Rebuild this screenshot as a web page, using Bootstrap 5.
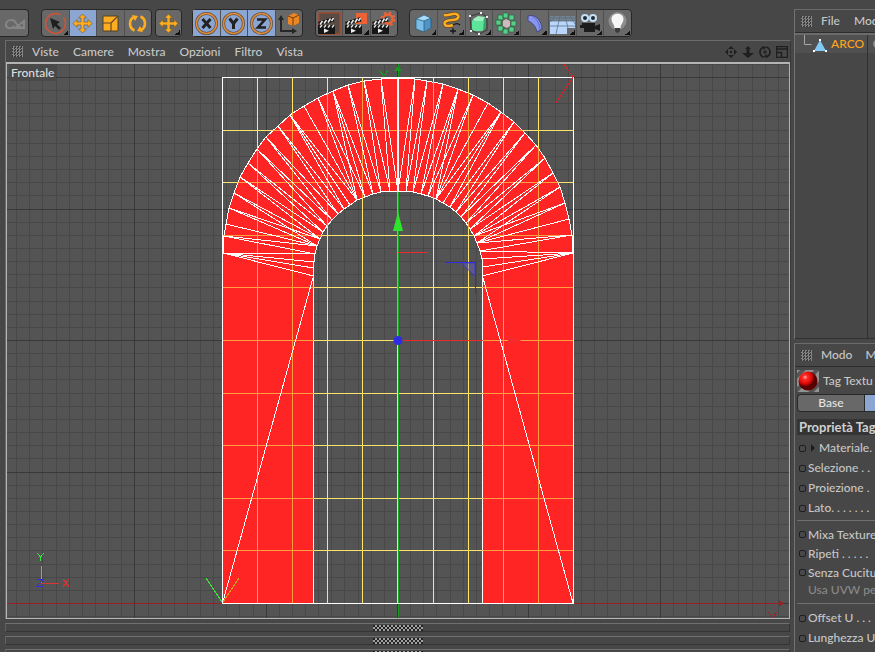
<!DOCTYPE html>
<html lang="it">
<head>
<meta charset="utf-8">
<meta name="viewport" content="width=device-width, initial-scale=1">
<title>ARCO</title>
<link href="https://cdn.jsdelivr.net/npm/bootstrap@5.3.0/dist/css/bootstrap.min.css" rel="stylesheet">
<style>
body{background:#474747;color:#c6c6c6;font:500 12px/16px Lato,"Open Sans",sans-serif;height:100vh;min-height:480px}
button{font:inherit;color:inherit;background:none;border:0;padding:0}
.side-panel{width:81px;padding-top:9px}
.tools{height:29px;margin-top:9px}
.tool-set{border:1px solid #272727;border-radius:4px;background:#686868;height:28px}
.tool-set button{flex:1 1 0;min-width:0;position:relative;border-right:1px solid #505050;display:flex;align-items:center;justify-content:center}
.tool-set button:last-child{border-right:0}
.tool-set button.on{background:#8ba6d2}
.tool-set svg{width:25px;height:25px;flex:none}
.more::after{content:"";position:absolute;right:1px;bottom:1px;background:linear-gradient(135deg,transparent 50%,#111 50%);width:5px;height:5px}
.w1{width:29px;border-left:0!important;border-radius:0 4px 4px 0!important}
.w3{width:83px}.w4{width:111px}.w8{width:223px}.w0{width:27px}
.view-edge{border-left:1px solid #6b6b6b;border-top:1px solid #6b6b6b;border-right:1px solid #383838;margin-left:5px;margin-right:3px;margin-top:2px}
.menu-row{height:21px}
.menu-items{gap:14px;padding-left:9px}
.grip{width:11px;height:11px;background:repeating-conic-gradient(#858585 0 25%,#3a3a3a 0 50%) 0 0/3px 3px}
.canvas-box{border:2px solid #b4b4b4;border-left-width:1px;border-right-width:1px;border-bottom-width:1px;background:#545454;position:relative;min-height:0}
.canvas-box svg{display:block;width:100%;height:100%;position:absolute;inset:0}
.view-name{position:absolute;left:2px;top:1px;background:#494949;color:#dedede;padding:0 2px;border-radius:2px}
.dock{height:9px;margin:4px 4px 0 5px;border:1px solid #343434;border-top-color:#707070;border-left-color:#606060}
.dock span{width:50px;height:6px;background:repeating-conic-gradient(#a0a0a0 0 25%,#242424 0 50%) 0 0/4px 4px}
.docks{height:33px}
.panel{border-left:1px solid #737373;border-top:1px solid #6b6b6b;overflow:hidden;white-space:nowrap}
.panel-head{height:23px;border-bottom:1px solid #2d2d2d;padding-left:6px;gap:9px}
.objects{height:306px;border-top:2px solid #6b6b6b;border-bottom:1px solid #303030}
.object-row{height:18px;background:#505050;color:#ffa31b}
.objects .flags{border-left:1px solid #303030;width:8px}
.tab-row{height:18px;border:1px solid #292929;border-right:0;border-radius:4px 0 0 4px;background:#686868;color:#e4e4e4}
.tab-row button:first-child{width:67px;border-right:1px solid #292929}
.tab-row button:last-child{background:#8ba6d2}
.prop-title{background:#343434;color:#d0d0d0;height:16px;margin-top:7px;padding-left:2px;font-size:13px}
.prop{height:20px}
.prop-group .prop{height:19px}
.prop input{appearance:none;width:7px;height:7px;border:1px solid #1e1e1e;border-radius:2px;background:#494949;margin:0 2px;flex:none}
.prop-note{padding-left:11px;color:#898989}
.prop-sep{border-top:1px solid #707070;margin:2px 0 4px}
.arrow{width:4px;height:8px;background:#1c1c1c;clip-path:polygon(0 0,100% 50%,0 100%);margin:0 4px 0 3px}
</style>
<script src="https://cdn.jsdelivr.net/npm/bootstrap@5.3.0/dist/js/bootstrap.bundle.min.js"></script>
</head>
<body class="d-flex overflow-hidden">
<svg width="0" height="0" class="position-absolute" aria-hidden="true">
<defs>
<g id="clap"><path d="M1 14h17v9H1z" fill="#171717"/><path d="M1 11l15-5 1.500 4.500L2 14z" fill="#171717"/><path d="M3 13.500l2.500-3.500M7 12.500L9.500 9M11 11.500L13.500 7.500M14.500 10l2-3" stroke="#eee" stroke-width="1.500"/><path d="M3 16.500l2-2.500M7 16.500l2-2.500M11 16.500l2-2.500M15 16.500l2-2.500" stroke="#ddd" stroke-width="1.500"/><path d="M7 17.500l5 2.300-5 2.200z" fill="#eee"/></g>
<g id="ring"><circle cx="12.500" cy="12.500" r="10" fill="none" stroke="#5e5148" stroke-width="3"/><circle cx="12.500" cy="12.500" r="10" fill="none" stroke="#e38c37" stroke-width="1.500"/></g>
</defs>
</svg>
<main class="flex-grow-1 d-flex flex-column" style="min-width:0">
<div class="tools d-flex flex-shrink-0" role="toolbar" aria-label="Strumenti">
<div class="tool-set w1 d-flex"><button aria-label="Ripeti azione"><svg viewBox="0 0 25 25" fill="none" stroke="#858585" stroke-width="2"><path d="M12 15c-3 4-9 2-8-2 1-5 8-5 10-1 2 3 4 5 6 4M13 17h9v-7z"/></svg></button></div>
<div class="tool-set w4 d-flex" style="margin-left:12px">
<button class="more" aria-label="Selezione"><svg viewBox="0 0 25 25"><circle cx="12.500" cy="12.500" r="10" fill="none" stroke="#cf5439" stroke-width="1.500" stroke-dasharray="52 4"/><path d="M7 7l10 4-3 2 4 4-2 2-4-4-2 3z" fill="#202020"/></svg></button>
<button class="on" aria-label="Muovi"><svg viewBox="0 0 25 25"><path id="mv" d="M12.500 3l4 4h-2.500v4h4V8.500l4 4-4 4V14h-4v4h2.500l-4 4-4-4H11v-4H7v2.500l-4-4 4-4V11h4V7H8.500z" fill="#ffad20" stroke="#66512c" stroke-width=".6"/></svg></button>
<button aria-label="Scala"><svg viewBox="0 0 25 25"><path d="M5 5h15v15H5z" fill="#ffad20" stroke="#554022"/><path d="M5 12h8v8M13 12l7-7" fill="none" stroke="#624a27" stroke-width="1.200"/></svg></button>
<button aria-label="Ruota"><svg viewBox="0 0 25 25"><path d="M9.500 19.500a7.500 7.500 0 0 1-.5-13.500M15.500 5.500a7.500 7.500 0 0 1 .5 13.500" fill="none" stroke="#ffad20" stroke-width="2.600"/><path d="M7 4l6 1-3 5zM18 21l-6-1 3-5z" fill="#ffad20"/></svg></button></div>
<div class="tool-set w0 d-flex" style="margin-left:3px"><button class="more" aria-label="Ultimo strumento"><svg viewBox="0 0 25 25"><use href="#mv"/></svg></button></div>
<div class="tool-set w4 d-flex" style="margin-left:10px">
<button class="on" aria-label="Asse X"><svg viewBox="0 0 25 25"><use href="#ring"/><path d="M8.500 8l8 9M16.500 8l-8 9" stroke="#222" stroke-width="3"/></svg></button>
<button class="on" aria-label="Asse Y"><svg viewBox="0 0 25 25"><use href="#ring"/><path d="M8.500 7.500l4 5 4-5M12.500 12v6" fill="none" stroke="#222" stroke-width="3"/></svg></button>
<button class="on" aria-label="Asse Z"><svg viewBox="0 0 25 25"><use href="#ring"/><path d="M8 8.500h8l-7 8h8" fill="none" stroke="#222" stroke-width="2.600"/></svg></button>
<button aria-label="Coordinate"><svg viewBox="0 0 25 25"><path d="M5 8v12h12" fill="none" stroke="#262626" stroke-width="2"/><path d="M5 4l3 5H2zM21 20l-5 3v-6z" fill="#262626"/><path d="M12 5l6-3 5 2v8l-6 3-5-2z" fill="#eb8623"/><path d="M12 5l5 2v8M17 7l6-3" fill="none" stroke="#6e3e15"/></svg></button></div>
<div class="tool-set w3 d-flex" style="margin-left:12px">
<button aria-label="Rendering vista"><svg viewBox="0 0 25 25"><path d="M2 2h21v21H2z" fill="#5b4b45" stroke="#9f482e" stroke-width="1.500"/><use href="#clap"/></svg></button>
<button class="more" aria-label="Rendering immagine"><svg viewBox="0 0 25 25"><path d="M12 2h11v11H12z" fill="#ed6336"/><use href="#clap"/></svg></button>
<button aria-label="Settaggi di rendering"><svg viewBox="0 0 25 25"><circle cx="17" cy="8" r="4.500" fill="none" stroke="#ed6336" stroke-width="2.500"/><circle cx="17" cy="8" r="6.500" fill="none" stroke="#ed6336" stroke-width="2" stroke-dasharray="2.600 2.500"/><use href="#clap"/></svg></button></div>
<div class="tool-set w8 d-flex" style="margin-left:11px">
<button class="more" aria-label="Cubo"><svg viewBox="0 0 25 25"><path d="M5 8l8-4 7 3v10l-7 4-8-3z" fill="#78bee8"/><path d="M5 8l8-4 7 3-7 3z" fill="#a5dcfa"/><path d="M13 10l7-3v10l-7 4z" fill="#4e94c6"/><path d="M5 8l8-4 7 3v10l-7 4-8-3zL13 10v11M13 10l7-3" fill="none" stroke="#2e5065" stroke-width=".7"/></svg></button>
<button class="more" aria-label="Spline"><svg viewBox="0 0 25 25" fill="none"><path id="sp" d="M5 4c5 1 8-2 12-1 5 2 2 6-4 6-5 0-9 2-7 5 2 2 5 1 8 0" stroke="#614525" stroke-width="4"/><path d="M5 4c5 1 8-2 12-1 5 2 2 6-4 6-5 0-9 2-7 5 2 2 5 1 8 0" stroke="#ffad20" stroke-width="2.500"/><path d="M14 14c3-2 5-2 7 0M14 17v6M11 20h6" stroke="#161616" stroke-width="1.300"/></svg></button>
<button class="more" aria-label="NURBS"><svg viewBox="0 0 25 25"><path d="M4 5l11-3 6 4v13l-8 4-8-4z" fill="none" stroke="#222" stroke-width=".7"/><rect x="6" y="8" width="12" height="12" rx="3" fill="#5ee39b"/><path d="M7 8l5-3 7 1-2 4H9z" fill="#9af0be"/><path d="M18 8l2-1v10l-3 3z" fill="#33a967"/><path d="M3 4h2v2H3zM14 1h2v2h-2zM20 5h2v2h-2zM4 19h2v2H4zM12 22h2v2h-2z" fill="#eee"/></svg></button>
<button class="more" aria-label="Array"><svg viewBox="0 0 25 25"><g fill="#57cf89" stroke="#28613f" stroke-width=".7"><path d="M9 2h5v5H9zM15 4h5v5h-5zM17 10h5v5h-5zM15 16h5v5h-5zM9 18h5v5H9zM4 15h5v5H4zM2 9h5v5H2zM4 4h5v5H4z"/></g><path d="M9 10l3-2 4 2v5l-3 2-4-2z" fill="#cdbbb9"/></svg></button>
<button class="more" aria-label="Deformatore"><svg viewBox="0 0 25 25"><path d="M6 5c8-3 14 6 14 13l-5 3c-1-5-4-9-9-11z" fill="#8894ed" stroke="#434a80"/><path d="M10 5c5 3 8 8 8 14" fill="none" stroke="#596cc4"/></svg></button>
<button class="more" aria-label="Ambiente"><svg viewBox="0 0 25 25"><path d="M0 5h25v5H0z" fill="#78838d"/><path d="M0 10h25v13H0z" fill="#bad6fa"/><path d="M0 7h25M0 10h25M0 15h25M5 5l-5 6M10 5L6 23M15 5l3 12M20 5l5 8" fill="none" stroke="#52697f" stroke-width=".7"/><path d="M17 17h8v6h-8z" fill="#686868"/></svg></button>
<button class="more" aria-label="Camera"><svg viewBox="0 0 25 25"><circle cx="8" cy="7" r="3" fill="#202b34" stroke="#c3e0f7" stroke-width="2"/><circle cx="16" cy="7" r="3" fill="#202b34" stroke="#c3e0f7" stroke-width="2"/><path d="M5 12h13v3l5-2v7l-5-2v3H7v-4H3v-3h2z" fill="#1c1c1c"/></svg></button>
<button class="more" aria-label="Luce"><svg viewBox="0 0 25 25"><circle cx="12.500" cy="10" r="9" fill="#8d8d8d"/><path d="M9.500 17c0-4-3-5-3-9 0-7 12-7 12 0 0 4-3 5-3 9z" fill="#f6f6f6"/><path d="M10 17h5v3l-2 2h-1l-2-2z" fill="#3b3b3b"/></svg></button></div>
</div>
<section class="view-edge flex-grow-1 d-flex flex-column" style="min-height:0">
<nav class="menu-row d-flex align-items-center flex-shrink-0" style="padding-left:6px">
<span class="grip"></span>
<div class="menu-items d-flex flex-grow-1"><button>Viste</button><button>Camere</button><button>Mostra</button><button>Opzioni</button><button>Filtro</button><button>Vista</button></div>
<div class="d-flex" style="gap:5px;padding-right:2px">
<button aria-label="Sposta vista"><svg class="d-block" width="12" height="12" viewBox="0 0 12 12"><path d="M6 0l3 3H3zM12 6L9 9V3zM6 12L3 9h6zM0 6l3-3v6zM5 5h2v2H5z" fill="#1f1f1f"/></svg></button>
<button aria-label="Zoom vista"><svg class="d-block" width="12" height="12" viewBox="0 0 12 12"><path d="M6 0l3 3H7.500v4H12l-6 5-6-5h4.500V3H3z" fill="#1f1f1f"/></svg></button>
<button aria-label="Ruota vista"><svg class="d-block" width="12" height="12" viewBox="0 0 12 12"><path d="M5 11A5 5 0 0 1 4 1.500M7 1a5 5 0 0 1 1 9.500" fill="none" stroke="#1f1f1f" stroke-width="1.600"/><path d="M3 0l4 1-2 3zM9 12l-4-1 2-3z" fill="#1f1f1f"/><circle cx="6" cy="6" r="1.500" fill="#1f1f1f"/></svg></button>
<button aria-label="Cambia vista"><svg class="d-block" width="12" height="12" viewBox="0 0 12 12" fill="none" stroke="#1f1f1f"><path d="M.5.500h11v11H.500zM.500 3h11M.500 6.500h5v5" stroke-width="1.400"/></svg></button></div>
</nav>
<div class="canvas-box flex-grow-1">
<svg id="scene" viewBox="7 64 782 554" preserveAspectRatio="xMidYMid slice" role="img" aria-label="Vista frontale dell'oggetto ARCO"></svg>
<span class="view-name">Frontale</span>
</div>
</section>
<div class="docks flex-shrink-0 overflow-hidden"><div class="dock d-flex justify-content-center align-items-center"><span></span></div><div class="dock d-flex justify-content-center align-items-center"><span></span></div><div class="dock d-flex justify-content-center align-items-center"><span></span></div></div>
</main>
<aside class="side-panel flex-shrink-0 d-flex flex-column">
<section class="panel">
<div class="panel-head d-flex align-items-center"><span class="grip flex-shrink-0"></span><button>File</button><button style="margin-left:5px">Mod</button></div>
<div class="objects d-flex flex-column">
<div class="object-row d-flex align-items-center flex-shrink-0"><svg class="flex-shrink-0" width="36" height="18" viewBox="0 0 36 18"><path d="M9.500 0v9.500h7" fill="none" stroke="#a5a5a5"/><path d="M25 5l6 11H19z" fill="#83c8f4"/><path d="M24 4h2v2h-2zM18 15h2v2h-2zM30 15h2v2h-2z" fill="#fff"/></svg><span class="flex-grow-1">ARCO</span><span class="flags h-100 d-flex align-items-center"><svg class="flex-shrink-0" width="14" height="10"><circle cx="9" cy="5" r="4" fill="#8c8c8c"/></svg></span></div>
<div class="d-flex flex-grow-1 justify-content-end"><span class="flags"></span></div>
</div></section>
<section class="panel flex-grow-1" style="margin-top:4px">
<div class="panel-head d-flex align-items-center"><span class="grip flex-shrink-0"></span><button>Modo</button><button style="margin-left:4px">M</button></div>
<div style="padding:3px 0 0 2px">
<div class="d-flex align-items-center" style="gap:4px"><svg class="flex-shrink-0" width="22" height="22" viewBox="0 0 22 22"><defs><radialGradient id="red" cx=".35" cy=".3"><stop stop-color="#ffb5b5"/><stop offset=".25" stop-color="#ff2c25"/><stop offset=".7" stop-color="#db0808"/><stop offset="1" stop-color="#590000"/></radialGradient></defs><path d="M0 0h22v22H0z" fill="#929292"/><path d="M-2 8L8-2M-2 22L22-2M12 24l12-12" stroke="#555" stroke-width="4"/><circle cx="11" cy="11" r="9.500" fill="url(#red)"/></svg><span>Tag Textu</span></div>
<div class="tab-row d-flex" style="margin-top:2px"><button>Base</button><button class="flex-grow-1" aria-label="Tag"></button></div>
<div class="prop-title fw-bold">Proprietà Tag</div>
<div style="padding-top:3px">
<label class="prop d-flex align-items-center"><input type="checkbox"><span class="arrow flex-shrink-0"></span>Materiale.</label>
<label class="prop d-flex align-items-center"><input type="checkbox">Selezione . .</label>
<label class="prop d-flex align-items-center"><input type="checkbox">Proiezione .</label>
<label class="prop d-flex align-items-center"><input type="checkbox">Lato. . . . . . .</label>
<div class="prop-group">
<div class="prop-sep"></div>
<label class="prop d-flex align-items-center"><input type="checkbox">Mixa Texture</label>
<label class="prop d-flex align-items-center"><input type="checkbox">Ripeti . . . . .</label>
<label class="prop d-flex align-items-center"><input type="checkbox">Senza Cucitu</label>
<div class="prop prop-note">Usa UVW per</div>
</div>
<div class="prop-sep"></div>
<label class="prop d-flex align-items-center"><input type="checkbox">Offset U . . .</label>
<label class="prop d-flex align-items-center"><input type="checkbox">Lunghezza U</label>
</div></div></section>
</aside>
<script>
const parts = [];
const path = (d, stroke, extra = '') => parts.push(`<path d="${d}" fill="none" stroke="${stroke}" shape-rendering="crispEdges" ${extra}/>`);
const at = v => Math.round(v) + 0.5;
// floor grid, every tenth line is darker
let minor = '', major = '';
for (let i = -60; i <= 60; i++) {
  const x = at(397 + i * 13.13), y = at(340 + i * 13.15);
  const seg = `M${x} -200V1000`, row = `M-400 ${y}H1300`;
  if (i % 10) minor += seg + row; else major += seg + row;
}
path(minor, '#484848'); path(major, '#393939');
path('M-400 603.5H780', '#9c2023');
path('M398.500 64V617', '#169a20');
// arch body
const outer = [[398,78],[381,79],[364,81],[348,85],[333,91],[318,98],[304,106],[290,115],[278,126],[266,137],[257,149],[248,163],[240,177],[234,193],[229,208],[226,224],[224,236],[223,253]];
const outerR = [[398,78],[415,79],[427,81],[443,84],[458,89],[473,95],[488,103],[501,112],[514,122],[525,133],[536,145],[545,158],[553,173],[560,187],[565,203],[569,219],[572,235],[573,253]];
const inner = [[398,191],[390,191],[381,192],[373,194],[365,197],[357,200],[350,205],[344,209],[338,214],[332,220],[327,226],[323,232],[320,239],[317,246],[315,254],[314,262],[313.5,268],[313.5,276]];
const innerR = [[398,191],[406,191],[413,192],[421,194],[428,196],[436,199],[443,203],[450,207],[456,212],[461,217],[466,223],[470,229],[474,236],[477,243],[480,251],[482,259],[482.5,267],[482.5,276]];
const str = a => a.map(p => p.join(' ')).join('L');
const body = `M222.500 603.500L${str([...outer].reverse())}L${str(outerR)}V603.500H482.500V276L${str([...innerR].reverse())}L${str(inner)}L313.500 603.500Z`;
parts.push(`<clipPath id="arch"><path d="${body}"/></clipPath><path d="${body}" fill="#ff2525" stroke="#fff" shape-rendering="crispEdges"/>`);
// control cage
let cage = '';
for (const x of [257, 292, 327, 362, 397, 433, 468, 503, 538]) cage += `M${x}.5 77V603`;
for (const y of [130, 182, 235, 287, 340, 393, 445, 498, 550]) cage += `M223 ${y}.5H573`;
path(cage, '#ffe36a'); path(cage, '#ff9e42', 'clip-path="url(#arch)"');
path('M397.500 78V191', '#fff0d0');
// mesh edges: outer vertex -> inner vertices
const fan = [[0],[0,1],[1,2],[2,3],[3,4,5],[4,5],[5],[5,6,7],[7,8],[8,9],[9,10],[10,11],[11,12],[12,13],[12,13],[13],[13,14],[14,15,16,17]];
let mesh = '';
for (const [o, n] of [[outer, inner], [outerR, innerR]])
  fan.forEach((to, k) => to.forEach(j => mesh += `M${o[k].join(' ')}L${n[j].join(' ')}`));
path(mesh + 'M313.500 276L222.500 603M482.500 276L573 603', '#fff');
path('M222.500 77.500H573.500V603.500H222.500Z', '#fff');
// axes and handles
path('M398.500 192V603', '#18a922'); path('M397.500 192V340', '#35f12e');
path('M398 340.500H483', '#e92a2a'); path('M398 252.500H428', '#e92a2a');
path('M445 262.500H475.500V294', '#302ee0');
path('M564 64L573 77L556 103', '#d72525');
path('M206 578L222 602', '#35e635'); path('M223 602L239 578', '#d3a026');
path('M379 70l5 6 4-6', '#169a20'); path('M768 612l5 5 4-5', '#9c2023');
path('M41.500 566V583', '#35e635'); path('M42 583.500H59', '#d93535');
path('M37 553l3.500 4 3.500-4M40.500 557v4', '#35e635');
path('M63 579l6 8M69 579l-6 8', '#d93535'); path('M37 579.500h6l-6 7h6', '#302ee0');
parts.push('<path d="M398 212l5 19h-10z" fill="#2ce52c"/><path d="M398 66l4 5h-8z" fill="#169a20"/><path d="M461 263h14v13z" fill="#6466d0" fill-opacity=".4" stroke="#302ee0" stroke-width=".7"/><path d="M779 600l5 3.500-5 3z" fill="#9c2023"/><circle cx="398" cy="340.500" r="4.500" fill="#2d2de4"/><path d="M508 336l14 4-14 5z" fill="#f52a2a"/>');
document.getElementById('scene').innerHTML = parts.join('');
</script>
</body>
</html>
